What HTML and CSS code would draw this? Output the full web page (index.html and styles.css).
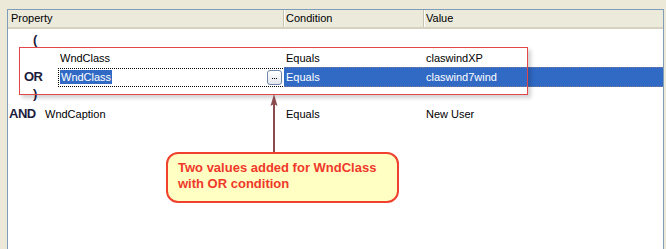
FILE: index.html
```html
<!DOCTYPE html>
<html>
<head>
<meta charset="utf-8">
<link rel="stylesheet" href="styles.css">
</head>
<body>
<div class="panel">
  <div class="header">
    <div class="hcell hprop">Property</div>
    <div class="hcell hcond">Condition</div>
    <div class="hcell hval">Value</div>
  </div>
  <div class="rows">
    <div class="row">
      <div class="cell prop paren-open"><span class="paren">(</span></div>
      <div class="cell"></div>
      <div class="cell"></div>
    </div>
    <div class="row">
      <div class="cell prop indent">WndClass</div>
      <div class="cell cond">Equals</div>
      <div class="cell val">claswindXP</div>
    </div>
    <div class="row selected">
      <div class="cell prop or-row">
        <span class="op op-or">OR</span>
        <div class="editbox">
          <span class="sel">WndClass</span>
          <span class="ellipsis"><i></i><i></i><i></i></span>
        </div>
      </div>
      <div class="cell cond hl">Equals</div>
      <div class="cell val hl">claswind7wind</div>
    </div>
    <div class="row">
      <div class="cell prop paren-open"><span class="paren">)</span></div>
      <div class="cell"></div>
      <div class="cell"></div>
    </div>
    <div class="row and-row">
      <div class="cell prop"><span class="op op-and">AND</span><span>WndCaption</span></div>
      <div class="cell cond">Equals</div>
      <div class="cell val">New User</div>
    </div>
  </div>
</div>

<div class="group-box"></div>
<svg class="arrow" width="12" height="64" viewBox="0 0 12 64">
  <line x1="6" y1="8" x2="6" y2="62" stroke="#8a4a4e" stroke-width="2"/>
  <path d="M6 0 L9.5 12 L6 10 L2.5 12 Z" fill="#8a4a4e"/>
</svg>
<div class="callout">Two values added for WndClass<br>with OR condition</div>
</body>
</html>
```

FILE: styles.css
```css
html, body {
  margin: 0;
  padding: 0;
}
body {
  background: #ece9d8;
  width: 666px;
  height: 249px;
  overflow: hidden;
  font-family: "Liberation Sans", Arial, sans-serif;
  font-size: 11px;
  color: #000;
  position: relative;
}
.panel {
  margin: 9px 0 0 7px;
  width: 655px;
  height: 239px;
  background: #fff;
  border: 1px solid #7f9db9;
  border-bottom: none;
}
.header {
  display: grid;
  grid-template-columns: 275px 140px 1fr;
  height: 17px;
  background: #ebeadb;
  border-bottom: 2px solid #d6d2c2;
}
.hcell {
  line-height: 17px;
  padding-left: 3px;
}
.hcond, .hval {
  border-left: 1px solid #c7c5b2;
  box-shadow: inset 1px 0 0 #fff;
  padding-left: 2px;
}
.rows {
  padding-top: 2px;
}
.row {
  display: grid;
  grid-template-columns: 275px 140px 1fr;
  height: 18px;
}
.and-row {
  margin-top: 2px;
}
.cell {
  line-height: 18px;
  white-space: nowrap;
  display: flex;
  align-items: center;
}
.cond, .val {
  padding-left: 3px;
}
.paren-open {
  padding-left: 25px;
}
.paren {
  font-weight: bold;
  font-size: 13px;
  color: #1c1c3c;
}
.indent {
  padding-left: 52px;
}
.or-row {
  padding-left: 16px;
}
.op {
  font-weight: bold;
  font-size: 13px;
  color: #1c1c3c;
  letter-spacing: -0.5px;
}
.op-or {
  width: 34px;
}
.op-and {
  width: 36px;
  padding-left: 1px;
}
.editbox {
  flex: 1;
  height: 17px;
  border: 1px dotted #000;
  border-right: none;
  display: flex;
  align-items: center;
  padding-left: 1px;
  position: relative;
}
.sel {
  background: #316ac5;
  color: #fff;
  line-height: 14px;
  padding: 0 1px;
}
.ellipsis {
  position: absolute;
  right: 1px;
  top: 1px;
  width: 13px;
  height: 13px;
  border: 1px solid #6f86a8;
  border-radius: 3px;
  background: linear-gradient(#ffffff, #e4e6ee);
  display: flex;
  justify-content: center;
  align-items: center;
  gap: 1px;
}
.ellipsis i {
  display: block;
  width: 1px;
  height: 1px;
  background: #000;
  margin-top: 2px;
}
.selected .hl {
  background: #316ac5;
  color: #fff;
  border-top: 1px dotted #7a7a9a;
  border-bottom: 1px dotted #7a7a9a;
}
.selected .cond {
  margin-left: 1px;
  padding-left: 2px;
}
.group-box {
  position: absolute;
  left: 19px;
  top: 47px;
  width: 507px;
  height: 46px;
  border: 1px solid #e0464a;
  box-shadow: 3px 3px 4px rgba(0, 0, 0, 0.18);
}
.arrow {
  position: absolute;
  left: 268px;
  top: 94px;
}
.callout {
  position: absolute;
  left: 166px;
  top: 152px;
  width: 213px;
  height: 37px;
  padding: 6px 6px 4px 10px;
  border: 2px solid #f0402e;
  border-radius: 12px;
  background: #ffffc4;
  color: #f0382a;
  font-family: "Liberation Sans", Arial, sans-serif;
  font-weight: bold;
  font-size: 13px;
  line-height: 16px;
}
```
